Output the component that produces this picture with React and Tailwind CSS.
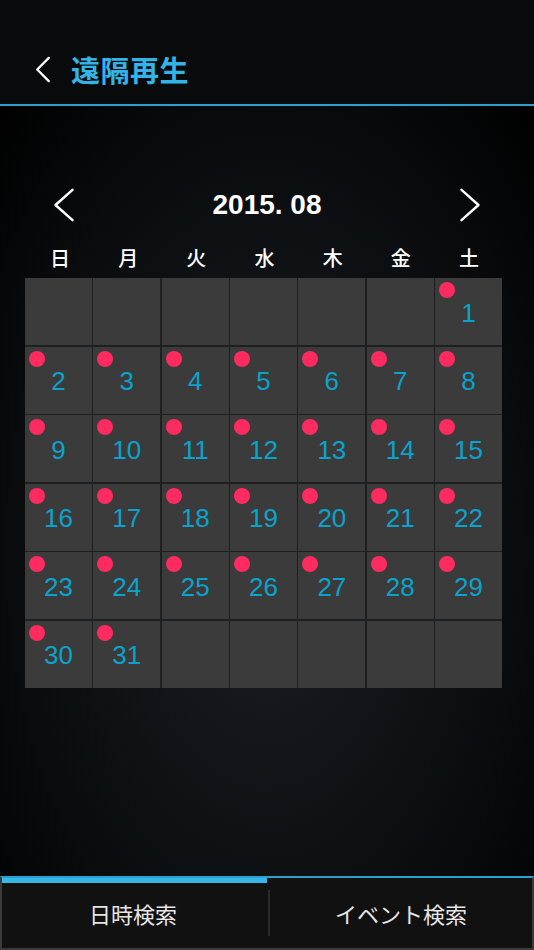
import React from "react";

const JP = { fontFamily: '"Noto Sans CJK JP", "Noto Sans", sans-serif' };
const LATIN = { fontFamily: '"Liberation Sans", Arial, sans-serif' };

const WEEKDAYS = ["日", "月", "火", "水", "木", "金", "土"];

function Chevron({ dir = "left", className = "" }) {
  const d = dir === "left" ? "M21 2 L3 18 L21 34" : "M3 2 L21 18 L3 34";
  return (
    <svg viewBox="0 0 24 36" className={className} fill="none" stroke="white" strokeWidth="2.6" strokeLinecap="round" strokeLinejoin="round">
      <path d={d} />
    </svg>
  );
}

function DayCell({ day }) {
  return (
    <div className="relative h-[67px] bg-[#3b3b3b]">
      {day ? (
        <>
          <span className="absolute left-[4px] top-[4px] h-[16px] w-[16px] rounded-full bg-[#fe2b60]" />
          <div className="flex h-full items-center justify-center pt-[2px] text-[26px] leading-none text-[#0aa3cc]" style={LATIN}>
            {day}
          </div>
        </>
      ) : null}
    </div>
  );
}

export default function App() {
  // Aug 2015 starts on Saturday
  const cells = [];
  for (let i = 0; i < 6; i++) cells.push(null);
  for (let d = 1; d <= 31; d++) cells.push(d);
  while (cells.length < 42) cells.push(null);

  return (
    <div className="flex h-[950px] w-[534px] flex-col overflow-hidden bg-black" style={JP}>
      {/* header */}
      <header className="flex h-[106px] shrink-0 items-center border-b-2 border-[#2a9fd0] bg-[#090a0c] pl-[35px] pt-[34px]">
        <svg viewBox="0 0 16 28" className="h-[27px] w-[16px]" fill="none" stroke="white" strokeWidth="2.4" strokeLinecap="round" strokeLinejoin="round">
          <path d="M14 2 L2 14 L14 26" />
        </svg>
        <h1 className="ml-[20px] text-[29px] font-bold leading-none tracking-[0.5px] text-[#33b4e6]">遠隔再生</h1>
      </header>

      {/* body */}
      <main className="flex flex-1 flex-col bg-[radial-gradient(ellipse_at_50%_58%,#1a1e22_0%,#0e1114_50%,#000_100%)]">
        <div className="mt-[82px] flex h-[34px] items-center justify-between px-[52px]">
          <Chevron dir="left" className="h-[34px] w-[24px]" />
          <span className="text-[28px] font-bold leading-none text-white" style={LATIN}>
            2015. 08
          </span>
          <Chevron dir="right" className="h-[34px] w-[24px]" />
        </div>

        <div className="ml-[26px] mt-[24px] grid w-[477px] grid-cols-7">
          {WEEKDAYS.map((w) => (
            <span key={w} className="text-center text-[20px] font-medium leading-[24px] text-white">
              {w}
            </span>
          ))}
        </div>

        <div className="ml-[25px] mt-[8px] grid w-[477px] grid-cols-7 gap-[1.5px] bg-[#1e1f20]">
          {cells.map((d, i) => (
            <DayCell key={i} day={d} />
          ))}
        </div>
      </main>

      {/* bottom tabs */}
      <nav className="relative flex h-[74px] shrink-0 border-x-2 border-b-2 border-t-2 border-x-[#3a3a3a] border-b-[#3a3a3a] border-t-[#2a9fd0] bg-[#111111]">
        <span className="absolute left-0 top-0 h-[5px] w-[265px] bg-[#36b7e8]" />
        <button className="flex flex-1 items-center justify-center pr-[4px] text-[22px] text-[#e6e6e6]">日時検索</button>
        <span className="h-[46px] w-[2px] self-center bg-[#2b2b2b]" />
        <button className="flex flex-1 items-center justify-center text-[22px] text-[#e6e6e6]">イベント検索</button>
      </nav>
    </div>
  );
}
